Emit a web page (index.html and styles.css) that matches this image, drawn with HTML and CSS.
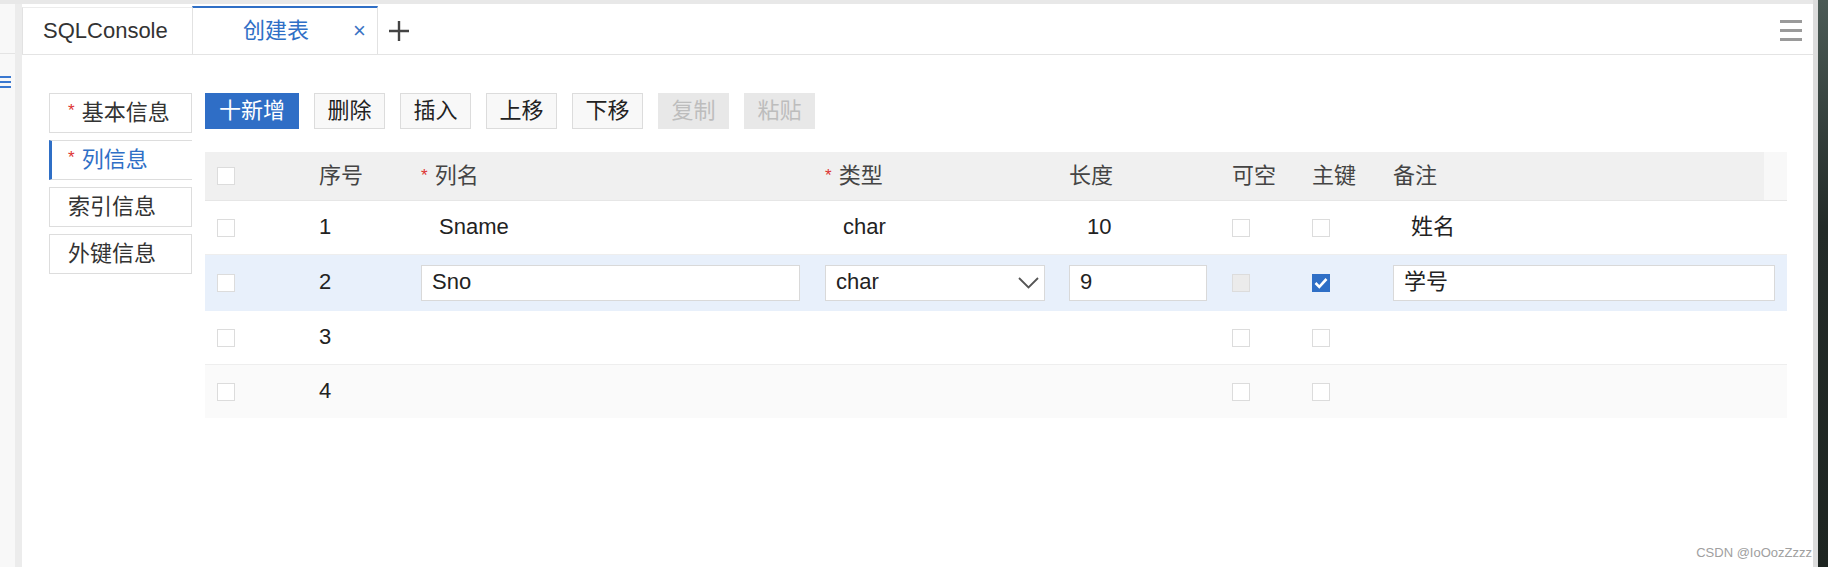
FILE: index.html
```html
<!DOCTYPE html>
<html>
<head>
<meta charset="UTF-8" />
<title>创建表</title>
<link rel="stylesheet" href="styles.css">
</head>
<body>
<div class="frame">
    <div class="topband"></div>
    <div class="frame-body">
        <div class="gutter">
            <div class="gutter-side">
                <div class="gutter-head"></div>
                <svg class="gutter-icon" width="11" height="14" viewBox="0 0 11 14">
                    <path d="M0 2h11M0 7h11M0 12h11" stroke="#3a78d0" stroke-width="2"/>
                </svg>
            </div>
            <div class="gutter-bar"></div>
        </div>

        <div class="main">
            <!-- tabs -->
            <div class="tabbar">
                <div class="tab">SQLConsole</div>
                <div class="tab active">
                    <span class="tab-title">创建表</span>
                    <span class="tab-close">×</span>
                </div>
                <div class="tab-add">
                    <svg width="20" height="20" viewBox="0 0 20 20">
                        <path d="M10 0v20M0 10h20" stroke="#444" stroke-width="2.4"/>
                    </svg>
                </div>
                <div class="tab-menu">
                    <span></span><span></span><span></span>
                </div>
            </div>

            <div class="content">
                <!-- side nav -->
                <div class="sidenav">
                    <div class="nav-item"><span class="req">*</span>基本信息</div>
                    <div class="nav-item active"><span class="req">*</span>列信息</div>
                    <div class="nav-item">索引信息</div>
                    <div class="nav-item">外键信息</div>
                </div>

                <div class="editor">
                    <div class="toolbar">
                        <button class="btn primary">十新增</button>
                        <button class="btn">删除</button>
                        <button class="btn">插入</button>
                        <button class="btn">上移</button>
                        <button class="btn">下移</button>
                        <button class="btn disabled">复制</button>
                        <button class="btn disabled">粘贴</button>
                    </div>

                    <table class="grid" cellspacing="0" cellpadding="0">
                        <colgroup>
                            <col style="width:102px"><col style="width:102px"><col style="width:404px">
                            <col style="width:244px"><col style="width:163px"><col style="width:80px">
                            <col style="width:81px"><col style="width:383px"><col style="width:23px">
                        </colgroup>
                        <thead>
                            <tr>
                                <th><span class="cb"></span></th>
                                <th>序号</th>
                                <th><span class="req">*</span>列名</th>
                                <th><span class="req">*</span>类型</th>
                                <th>长度</th>
                                <th>可空</th>
                                <th>主键</th>
                                <th>备注</th>
                                <th class="gap"></th>
                            </tr>
                        </thead>
                        <tbody>
                            <tr>
                                <td><span class="cb"></span></td>
                                <td>1</td>
                                <td><span class="val">Sname</span></td>
                                <td><span class="val">char</span></td>
                                <td><span class="val">10</span></td>
                                <td><span class="cb"></span></td>
                                <td><span class="cb"></span></td>
                                <td colspan="2"><span class="val">姓名</span></td>
                            </tr>
                            <tr class="selected">
                                <td><span class="cb"></span></td>
                                <td>2</td>
                                <td><div class="field name">Sno</div></td>
                                <td>
                                    <div class="field type">char
                                        <svg class="chevron" width="21" height="12" viewBox="0 0 21 12">
                                            <path d="M1 1l9.5 9.5L20 1" fill="none" stroke="#555" stroke-width="1.8"/>
                                        </svg>
                                    </div>
                                </td>
                                <td><div class="field len">9</div></td>
                                <td><span class="cb off"></span></td>
                                <td>
                                    <span class="cb on">
                                        <svg width="18" height="18" viewBox="0 0 18 18">
                                            <path d="M3.5 9l3.8 3.8L14.5 5" fill="none" stroke="#fff" stroke-width="2.6"/>
                                        </svg>
                                    </span>
                                </td>
                                <td colspan="2"><div class="field note">学号</div></td>
                            </tr>
                            <tr>
                                <td><span class="cb"></span></td>
                                <td>3</td>
                                <td></td><td></td><td></td>
                                <td><span class="cb"></span></td>
                                <td><span class="cb"></span></td>
                                <td colspan="2"></td>
                            </tr>
                            <tr>
                                <td><span class="cb"></span></td>
                                <td>4</td>
                                <td></td><td></td><td></td>
                                <td><span class="cb"></span></td>
                                <td><span class="cb"></span></td>
                                <td colspan="2"></td>
                            </tr>
                        </tbody>
                    </table>
                </div>
            </div>
        </div>
    </div>
</div>
<div class="rightstrip"></div>

<div class="watermark">CSDN @IoOozZzzz</div>
</body>
</html>
```

FILE: styles.css
```css
html, body{
    margin:0px;
    padding:0px;
    width:100%;
    height:100%;
}
body{
    display:flex;
    height:567px;
    overflow:hidden;
    background:#fff;
    color:#222;
    font: 22px/1.2 "Liberation Sans", "Noto Sans CJK SC", Arial, sans-serif;
    position:relative;
}

/* outer frame */
.frame{
    flex:1;
    display:flex;
    flex-direction:column;
}
.topband{
    height:4px;
    background:#e8e8e8;
}
.frame-body{
    flex:1;
    display:flex;
}
.rightstrip{
    width:10px;
    border-left:5px solid #dcdcdc;
    background:linear-gradient(#4b5a55, #232b28 40%, #1e2521);
}

/* left gutter */
.gutter{
    display:flex;
}
.gutter-side{
    width:15px;
    background:#f8f8f8;
}
.gutter-head{
    height:49px;
    border-bottom:1px solid #e4e4e4;
}
.gutter-icon{
    display:block;
    margin-top:21px;
}
.gutter-bar{
    width:7px;
    background:#ececec;
}

.main{
    flex:1;
    display:flex;
    flex-direction:column;
}

/* tabs */
.tabbar{
    height:50px;
    display:flex;
    align-items:flex-end;
    border-bottom:1px solid #e4e4e4;
}
.tab{
    height:47px;
    box-sizing:border-box;
    display:flex;
    align-items:center;
    border-left:1px solid #e2e2e2;
    border-top:1px solid #ececec;
    padding-left:20px;
    width:170px;
    color:#333;
}
.tab.active{
    width:186px;
    height:48px;
    border-top:2px solid #2f6fc6;
    border-right:1px solid #e2e2e2;
    padding-left:50px;
    color:#2f6fc6;
}
.tab-close{
    margin-left:44px;
    font-size:22px;
    color:#3b73c4;
}
.tab-add{
    width:42px;
    height:47px;
    display:flex;
    align-items:center;
    justify-content:center;
}
.tab-menu{
    margin-left:auto;
    margin-right:11px;
    align-self:center;
    display:flex;
    flex-direction:column;
    gap:6px;
    padding-top:2px;
}
.tab-menu span{
    display:block;
    width:22px;
    height:3px;
    background:#9a9a9a;
}

/* body */
.content{
    flex:1;
    display:flex;
    gap:13px;
    padding:38px 26px 0 27px;
}
.sidenav{
    width:143px;
    display:flex;
    flex-direction:column;
    gap:7px;
}
.nav-item{
    height:40px;
    box-sizing:border-box;
    border:1px solid #ddd;
    display:flex;
    align-items:center;
    padding-left:18px;
    color:#333;
}
.nav-item.active{
    border-right:none;
    border-left:3px solid #2f6fc6;
    padding-left:16px;
    color:#2f6fc6;
}
.req{
    color:#d33;
    font-size:17px;
    margin-right:7px;
    position:relative;
    top:-2px;
}

.editor{
    flex:1;
}
.toolbar{
    display:flex;
    gap:15px;
}
.btn{
    height:36px;
    width:71px;
    padding:0;
    box-sizing:border-box;
    border:1px solid #dcdcdc;
    background:#f8f8f8;
    color:#222;
    font:inherit;
    line-height:34px;
    cursor:pointer;
}
.btn.primary{
    width:94px;
    background:#2f6ec6;
    border-color:#2f6ec6;
    color:#fff;
}
.btn.disabled{
    background:#e8e8e8;
    border-color:#e8e8e8;
    color:#bdbdbd;
}

/* grid */
.grid{
    margin-top:23px;
    width:100%;
    table-layout:fixed;
    border-collapse:collapse;
}
.grid th{
    height:48px;
    background:#f0f0f0;
    color:#444;
    font-weight:normal;
    text-align:left;
    padding:0 0 0 12px;
    border-bottom:1px solid #e6e6e6;
}
.grid th.gap{
    background:#f8f8f8;
}
.grid td{
    height:53px;
    padding:0 0 0 12px;
    border-bottom:1px solid #eee;
    white-space:nowrap;
}
.grid tbody tr:nth-child(even) td{
    background:#fafafa;
}
.grid tbody tr:last-child td{
    border-bottom:none;
}
.grid tbody tr.selected td{
    height:55px;
    background:#e8f0fb;
    border-bottom-color:#e8f0fb;
}
.val{
    padding-left:18px;
}

.cb{
    display:block;
    width:18px;
    height:18px;
    box-sizing:border-box;
    border:1px solid #dcdcdc;
    background:#fff;
}
.cb.off{
    background:#ebebeb;
}
.cb.on{
    border-color:#2f6fc6;
    background:#2f6fc6;
}
.cb.on svg{
    display:block;
    margin:-1px;
}

.field{
    height:36px;
    box-sizing:border-box;
    border:1px solid #d9d9d9;
    background:#fff;
    padding:0 10px;
    display:flex;
    align-items:center;
}
.field.name{ width:379px; }
.field.type{ width:220px; }
.field.len{ width:138px; }
.field.note{ width:382px; }
.chevron{
    margin-left:auto;
    margin-right:-5px;
}

.watermark{
    position:absolute;
    right:16px;
    bottom:7px;
    font:13px "Liberation Sans", Arial, sans-serif;
    color:#a0a0a0;
}
```
